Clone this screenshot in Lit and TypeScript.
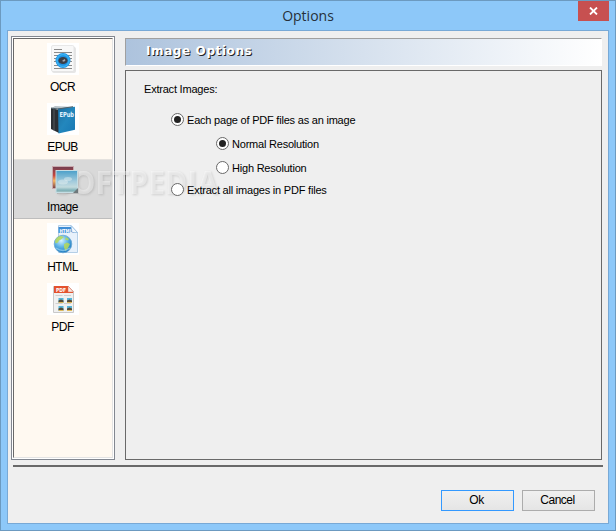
import { LitElement, html, css, svg } from "lit";
import { customElement, property, state } from "lit/decorators.js";
import { classMap } from "lit/directives/class-map.js";

const icons: Record<string, unknown> = {
  OCR: svg`
    <rect width="32" height="32" fill="#fff"/>
    <rect x="5" y="4" width="24" height="26" rx="2" fill="#e6e6e6"/>
    <rect x="4.500" y="2.500" width="22.500" height="26" rx="1.500" fill="#f8f8f8" stroke="#e0e0e0" stroke-width=".7"/>
    <path d="M7 6.500h8M7 9.500h18M7 12.500h18M7 15.500h18M7 18.500h18M7 22.500h18M7 25.500h18" stroke="#8a8a8a" stroke-width="1"/>
    <circle cx="16" cy="17.500" r="7.500" fill="#1e8fe0"/>
    <circle cx="16" cy="17.500" r="6" fill="none" stroke="#36b0f2" stroke-width="1.600"/>
    <ellipse cx="16" cy="17.500" rx="4.600" ry="3.600" fill="#3b3f48"/>
    <path d="M15 18l2.500-2 1 1.200-1.500 1.600z" fill="#a9acb2"/>`,
  EPUB: svg`
    <rect width="32" height="32" fill="#fff"/>
    <defs><linearGradient id="eb" x1="0" y1="0" x2="1" y2="1"><stop offset="0" stop-color="#1b6ea0"/><stop offset=".5" stop-color="#2387bd"/><stop offset="1" stop-color="#1878b4"/></linearGradient></defs>
    <path d="M4 5.500L8 3l20 1-15 3z" fill="#b9c3c8"/>
    <path d="M4 5l8 2v23l-8-4z" fill="#2b2f33"/>
    <path d="M7 6v21.500" stroke="#555a5e" stroke-width="1"/>
    <path d="M11 5.500L28 3.800v23L11.500 30.500z" fill="url(#eb)"/>
    <path d="M4 5l7 1 15-2.300" fill="none" stroke="#50616b" stroke-width="1"/>
    <text x="12.500" y="13.500" class="tiny" font-size="7" fill="#e4f4ff" textLength="14.500" lengthAdjust="spacingAndGlyphs">EPub</text>`,
  Image: svg`
    <defs>
      <linearGradient id="sun" x1="0" y1="0" x2="0" y2="1"><stop offset="0" stop-color="#6f3f52"/><stop offset=".4" stop-color="#c4443f"/><stop offset=".65" stop-color="#f6b764"/><stop offset="1" stop-color="#743b46"/></linearGradient>
      <linearGradient id="sky" x1="0" y1="0" x2="0" y2="1"><stop offset="0" stop-color="#4a9fc9"/><stop offset=".5" stop-color="#a3cbdc"/><stop offset=".75" stop-color="#c3dbde"/><stop offset=".9" stop-color="#7fb1b8"/><stop offset="1" stop-color="#a9c6c6"/></linearGradient>
    </defs>
    <rect x="5.500" y="3.500" width="21" height="22" fill="url(#sun)" stroke="#c9a9ad"/>
    <path d="M10 9h21.500v22H10z" fill="#999" opacity=".5"/>
    <rect x="9" y="7.500" width="21.500" height="22" fill="url(#sky)" stroke="#c5dde4"/>
    <ellipse cx="16" cy="19" rx="5" ry="2.500" fill="#e8f1f2" opacity=".45"/>
    <ellipse cx="21" cy="16" rx="4" ry="2" fill="#e8f1f2" opacity=".45"/>
    <path d="M26 30l5-5v5z" fill="#6f787b"/>`,
  HTML: svg`
    <rect width="32" height="32" fill="#fff"/>
    <defs><radialGradient id="globe" cx=".4" cy=".3" r=".75"><stop offset="0" stop-color="#d6f3ff"/><stop offset=".5" stop-color="#5cb2e6"/><stop offset="1" stop-color="#1672ba"/></radialGradient></defs>
    <path d="M11.500 2.500H24l6.500 7v20H11.500z" fill="#e7f1fb" stroke="#b5cfe6"/>
    <path d="M11.500 4H24l3 6H11.500z" fill="#3f8dd5"/>
    <path d="M24 2.500l6.500 7h-5.500z" fill="#f2f8fd" stroke="#88b5dd" stroke-width=".7"/>
    <text x="12.500" y="9.500" class="tiny" font-size="5.500" fill="#fff" textLength="12.500" lengthAdjust="spacingAndGlyphs">HTML</text>
    <circle cx="16" cy="21" r="8.800" fill="url(#globe)" stroke="#6ba7d2" stroke-width=".8"/>
    <path d="M8 18q2-5 6-5l3 1-3 2.500-2 1-1 2-2.500 1zM17 21l3-1.500 3 1.500-2 4-2.500 3-1.500-3.500zM19 14l3 2-1 1.500-3-1z" fill="#b7d957" opacity=".85"/>
    <path d="M9 25q7 5 14 0" fill="none" stroke="#a9dcf7" stroke-width="1.500" opacity=".6"/>`,
  PDF: svg`
    <rect width="32" height="32" fill="#fff"/>
    <path d="M6.500 3.500H21l5.500 5v21h-20z" fill="#f0f0f0" stroke="#c9c9c9"/>
    <path d="M7 3h14l5 5.500V10H7z" fill="#e4512d"/>
    <path d="M21 3l5.500 6H21z" fill="#f8e9e4" stroke="#d46b53" stroke-width=".5"/>
    <text x="9" y="9" class="tiny" font-size="5.500" fill="#fff" textLength="10" lengthAdjust="spacingAndGlyphs">PDF</text>
    ${[[11.5, 15], [20, 15], [11.5, 23], [20, 23]].map(([x, y]) => svg`
      <rect x=${x - 3} y=${y - 3} width="7" height="1" fill="#cfcfcf"/>
      <rect x=${x} y=${y} width="5" height="5" fill="#55b4d8"/>
      <path d=${`M${x} ${y + 2.500}l2.500-1 2.500 1v1.500h-5z`} fill="#574b36"/>
      <rect x=${x} y=${y + 4} width="5" height="1" fill="#dfb95b"/>`)}`,
};

@customElement("option-radio")
class OptionRadio extends LitElement {
  @property() label = "";
  @property({ type: Boolean }) checked = false;
  static styles = css`
    :host { display: flex; align-items: flex-start; height: 14px; gap: 3px; white-space: nowrap; }
    .ring { box-sizing: border-box; width: 13px; height: 13px; border: 1px solid #686868; border-radius: 50%; background: #fff; display: grid; place-items: center; flex: none; }
    .dot { width: 7px; height: 7px; border-radius: 50%; background: #222; }
  `;
  render() {
    return html`<span class="ring">${this.checked ? html`<span class="dot"></span>` : ""}</span><span>${this.label}</span>`;
  }
}

@customElement("app-root")
class AppRoot extends LitElement {
  @state() page = "Image";
  @state() mode = "pages";
  @state() resolution = "normal";

  static styles = css`
    * { box-sizing: border-box; }
    :host { display: block; position: relative; width: 616px; height: 531px; font: 11px/14px "Liberation Sans", Arial, sans-serif; letter-spacing: -.21px; color: #000; overflow: hidden; }
    .window { height: 531px; display: flex; flex-direction: column; background: #8dc8f9; border: 1px solid #6c9ac0; padding: 0 6px 6px; }
    .titlebar { height: 29px; flex: none; display: grid; grid-template-columns: 31px 1fr 31px; }
    .title { grid-column: 2; text-align: center; font: 14px/29px "Open Sans", sans-serif; letter-spacing: 0; color: #26303a; }
    .close { height: 20px; background: #c75050; display: grid; place-items: center; }
    .client { flex: 1; border: 1px solid #78a9d6; background: #efefef; display: flex; flex-direction: column; }
    .main { display: flex; gap: 10px; padding: 5px 0 0 3px; }
    .side { width: 104px; height: 424px; border: 1px solid #828790; background: #fff; padding: 1px; }
    .list { height: 420px; background: #fff9f1; border: 1px solid #696969; border-right-color: #e3e3e3; border-bottom-color: #e3e3e3; }
    .item { height: 60px; padding-top: 4px; display: flex; flex-direction: column; align-items: center; font-size: 12px; line-height: 16px; letter-spacing: -.5px; gap: 4px; }
    .item.on { background: #d9d9d9; border-bottom: 1px solid #bdbdbd; border-top: 1px solid #e5e2de; padding-top: 3px; }
    .name { padding-right: 1px; }
    .icon { width: 32px; height: 32px; display: block; flex: none; position: relative; z-index: 2; }
    .tiny { font-family: "DejaVu Sans", sans-serif; font-weight: bold; letter-spacing: 0; }
    .content { padding-top: 2px; display: flex; flex-direction: column; gap: 4px; }
    .heading { width: 477px; height: 28px; border: 1px solid #fff; border-top-color: #a0a0a0; border-left-color: #a0a0a0; background: linear-gradient(90deg, #adc3dd, #fff); padding-left: 20px; font: bold 12px/24px "DejaVu Sans", sans-serif; letter-spacing: .6px; color: #fff; text-shadow: 1px 1px 0 #222; }
    .panel { width: 477px; height: 390px; border: 1px solid #696969; padding: 11px 0 0 18px; display: flex; flex-direction: column; align-items: flex-start; }
    .group { padding: 17px 0 0 27px; }
    .nested { padding: 10px 0 8px 45px; display: flex; flex-direction: column; gap: 10px; }
    option-radio { position: relative; z-index: 2; }
    .rule { height: 2px; margin: 5px 5px 0; background: #696969; flex: none; }
    .buttons { display: flex; justify-content: flex-end; gap: 8px; padding: 23px 13px 0 0; }
    .button { width: 73px; height: 21px; border: 1px solid #acacac; background: linear-gradient(#f0f0f0, #e5e5e5); font: 12px/19px "Liberation Sans", Arial, sans-serif; letter-spacing: -.5px; text-align: center; padding: 0 2px 0 0; color: #000; }
    .button.default { border-color: #3399ff; }
    .watermark { position: absolute; z-index: 1; left: 46px; top: 158px; pointer-events: none; overflow: visible; filter: drop-shadow(1px 1px 1px rgba(0,0,0,.3)); }
    .mark { font: bold 32px "Open Sans", sans-serif; letter-spacing: 0; fill: #fff; fill-opacity: .42; }
  `;

  render() {
    return html`
      <div class="window">
        <div class="titlebar">
          <div class="title">Options</div>
          <div class="close"><svg width="9" height="8" viewBox="0 0 9 8"><path d="M1 .5l7 7M8 .5l-7 7" stroke="#fff" stroke-width="1.800"/></svg></div>
        </div>
        <div class="client">
          <div class="main">
            <div class="side"><div class="list">
              ${Object.keys(icons).map((name) => html`
                <div class=${classMap({ item: true, on: name === this.page })} @click=${() => (this.page = name)}>
                  <svg class="icon" viewBox="0 0 32 32">${icons[name]}</svg>
                  <span class="name">${name}</span>
                </div>`)}
            </div></div>
            <div class="content">
              <div class="heading">${this.page} Options</div>
              <div class="panel">
                <span>Extract Images:</span>
                <div class="group">
                  <option-radio label="Each page of PDF files as an image" ?checked=${this.mode === "pages"} @click=${() => (this.mode = "pages")}></option-radio>
                  <div class="nested">
                    <option-radio label="Normal Resolution" ?checked=${this.resolution === "normal"} @click=${() => (this.resolution = "normal")}></option-radio>
                    <option-radio label="High Resolution" ?checked=${this.resolution === "high"} @click=${() => (this.resolution = "high")}></option-radio>
                  </div>
                  <option-radio label="Extract all images in PDF files" ?checked=${this.mode === "all"} @click=${() => (this.mode = "all")}></option-radio>
                </div>
              </div>
            </div>
          </div>
          <div class="rule"></div>
          <div class="buttons">
            <button class="button default">Ok</button>
            <button class="button">Cancel</button>
          </div>
        </div>
      </div>
      <svg class="watermark" width="190" height="48"><text class="mark" x="9" y="36" textLength="163" lengthAdjust="spacingAndGlyphs">SOFTPEDIA</text></svg>
    `;
  }
}
